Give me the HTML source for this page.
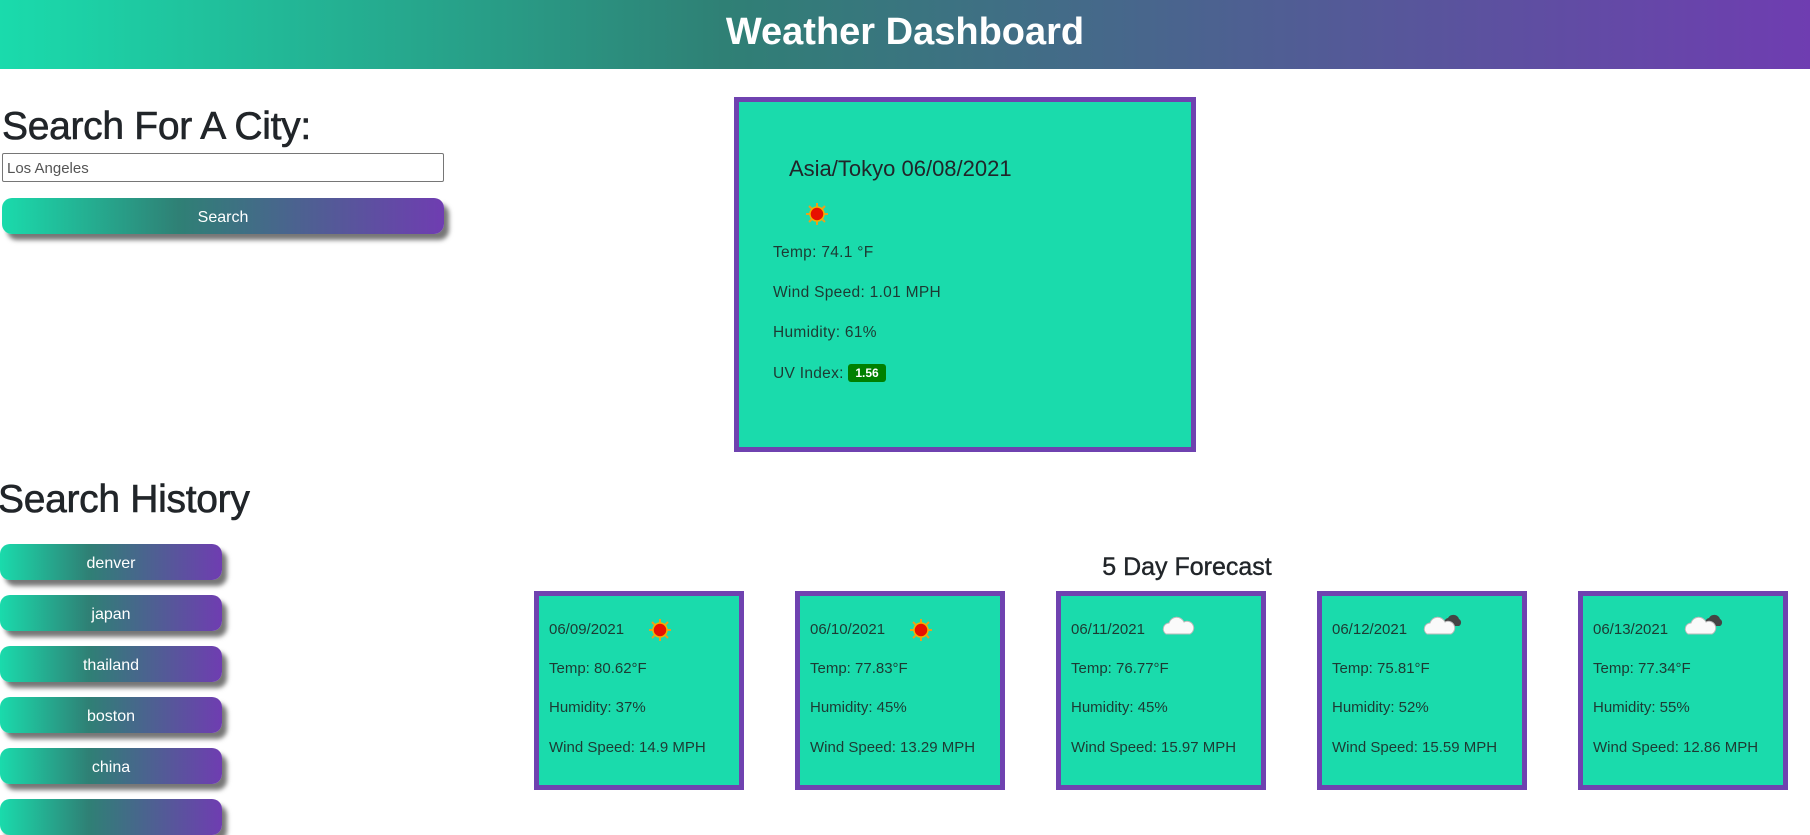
<!DOCTYPE html>
<html><head><meta charset="utf-8"><style>
*{margin:0;padding:0;box-sizing:border-box}
body{width:1810px;height:807px;overflow:hidden;background:#fff;font-family:"Liberation Sans",sans-serif;color:#212529;position:relative}
.grad{background:linear-gradient(90deg,#1adbac 0%,#2f8075 40%,#6f3db1 100%)}
header{position:absolute;left:0;top:0;width:1810px;height:69px;background:linear-gradient(90deg,#1adbac 0%,#2f8075 40%,#6f3db1 100%);color:#fff;text-align:center;font-weight:bold;font-size:38px;line-height:65px}
.abs{position:absolute}
h2{position:absolute;font-weight:normal;font-size:39px;white-space:nowrap;letter-spacing:-0.3px;-webkit-text-stroke:0.6px #212529}
.btn{position:absolute;color:#fff;text-align:center;border-radius:10px;box-shadow:5px 6px 5px #777;font-size:16px}
.card{position:absolute;background:#1adbac;border:5px solid #6f42b0}
.card p{position:absolute;font-size:15px;white-space:nowrap;color:#1d3a33}
.big p{font-size:15.5px;letter-spacing:0.3px}
</style></head><body>
<header>Weather Dashboard</header>
<h2 style="left:2px;top:105px">Search For A City:</h2>
<div class="abs" style="left:2px;top:153px;width:442px;height:29px;border:1px solid #767676;border-radius:2px;font-size:15px;color:#555;padding:6px 4px">Los Angeles</div>
<div class="btn grad" style="left:2px;top:198px;width:442px;height:36px;line-height:39px">Search</div>

<div class="card big" style="left:734px;top:97px;width:462px;height:355px">
<div class="abs" style="left:50px;top:54px;font-size:22px;white-space:nowrap">Asia/Tokyo 06/08/2021</div>
<svg class="abs" style="left:66px;top:100px" width="24" height="24" viewBox="0 0 24 24"><g stroke="#e8a020" stroke-width="2"><path d="M12 1v22M1 12h22M4 4l16 16M20 4L4 20"/></g><circle cx="12" cy="12" r="7" fill="#e81000" stroke="#f5b000" stroke-width="1.5"/></svg>
<p style="left:34px;top:142px">Temp: 74.1 °F</p>
<p style="left:34px;top:182px">Wind Speed: 1.01 MPH</p>
<p style="left:34px;top:222px">Humidity: 61%</p>
<p style="left:34px;top:262px">UV Index: <span style="display:inline-block;background:#008000;color:#fff;font-weight:bold;font-size:12px;padding:2px 7px;border-radius:3px;vertical-align:1px;letter-spacing:0">1.56</span></p>
</div>

<h2 style="left:-2px;top:478px">Search History</h2>
<div class="btn grad" style="left:0;top:544px;width:222px;height:36px;line-height:39px">denver</div>
<div class="btn grad" style="left:0;top:595px;width:222px;height:36px;line-height:39px">japan</div>
<div class="btn grad" style="left:0;top:646px;width:222px;height:36px;line-height:39px">thailand</div>
<div class="btn grad" style="left:0;top:697px;width:222px;height:36px;line-height:39px">boston</div>
<div class="btn grad" style="left:0;top:748px;width:222px;height:36px;line-height:39px">china</div>
<div class="btn grad" style="left:0;top:799px;width:222px;height:36px;line-height:39px"></div>

<div class="abs" style="left:1087px;top:553px;width:200px;text-align:center;font-size:25px;white-space:nowrap;-webkit-text-stroke:0.4px #212529">5 Day Forecast</div>

<svg width="0" height="0" style="position:absolute"><defs>
<g id="sun"><g stroke="#e8a020" stroke-width="2"><path d="M12 1v22M1 12h22M4 4l16 16M20 4L4 20"/></g><circle cx="12" cy="12" r="7" fill="#e81000" stroke="#f5b000" stroke-width="1.5"/></g>
<g id="cloud"><path d="M4 22a6 6 0 0 1 3-11a8 8 0 0 1 15-1a6 6 0 0 1 6 12z" fill="#fafafa" stroke="#bbb" stroke-width="1"/></g>
<g id="cloud2"><path d="M22 16a5 5 0 0 1 3-8a6 6 0 0 1 11 1a4 4 0 0 1 0 7z" fill="#444"/><path d="M4 24a6 6 0 0 1 3-11a8 8 0 0 1 15-1a6 6 0 0 1 6 12z" fill="#fafafa" stroke="#bbb" stroke-width="1"/></g>
</defs></svg>

<div class="card" style="left:534px;top:591px;width:210px;height:199px">
<p style="left:10px;top:25px">06/09/2021</p><svg class="abs" style="left:109px;top:22px" width="24" height="24"><use href="#sun"/></svg>
<p style="left:10px;top:64px">Temp: 80.62°F</p><p style="left:10px;top:103px">Humidity: 37%</p><p style="left:10px;top:143px">Wind Speed: 14.9 MPH</p></div>
<div class="card" style="left:795px;top:591px;width:210px;height:199px">
<p style="left:10px;top:25px">06/10/2021</p><svg class="abs" style="left:109px;top:22px" width="24" height="24"><use href="#sun"/></svg>
<p style="left:10px;top:64px">Temp: 77.83°F</p><p style="left:10px;top:103px">Humidity: 45%</p><p style="left:10px;top:143px">Wind Speed: 13.29 MPH</p></div>
<div class="card" style="left:1056px;top:591px;width:210px;height:199px">
<p style="left:10px;top:25px">06/11/2021</p><svg class="abs" style="left:101px;top:16px" width="40" height="30"><use href="#cloud"/></svg>
<p style="left:10px;top:64px">Temp: 76.77°F</p><p style="left:10px;top:103px">Humidity: 45%</p><p style="left:10px;top:143px">Wind Speed: 15.97 MPH</p></div>
<div class="card" style="left:1317px;top:591px;width:210px;height:199px">
<p style="left:10px;top:25px">06/12/2021</p><svg class="abs" style="left:101px;top:14px" width="42" height="32"><use href="#cloud2"/></svg>
<p style="left:10px;top:64px">Temp: 75.81°F</p><p style="left:10px;top:103px">Humidity: 52%</p><p style="left:10px;top:143px">Wind Speed: 15.59 MPH</p></div>
<div class="card" style="left:1578px;top:591px;width:210px;height:199px">
<p style="left:10px;top:25px">06/13/2021</p><svg class="abs" style="left:101px;top:14px" width="42" height="32"><use href="#cloud2"/></svg>
<p style="left:10px;top:64px">Temp: 77.34°F</p><p style="left:10px;top:103px">Humidity: 55%</p><p style="left:10px;top:143px">Wind Speed: 12.86 MPH</p></div>
</body></html>
